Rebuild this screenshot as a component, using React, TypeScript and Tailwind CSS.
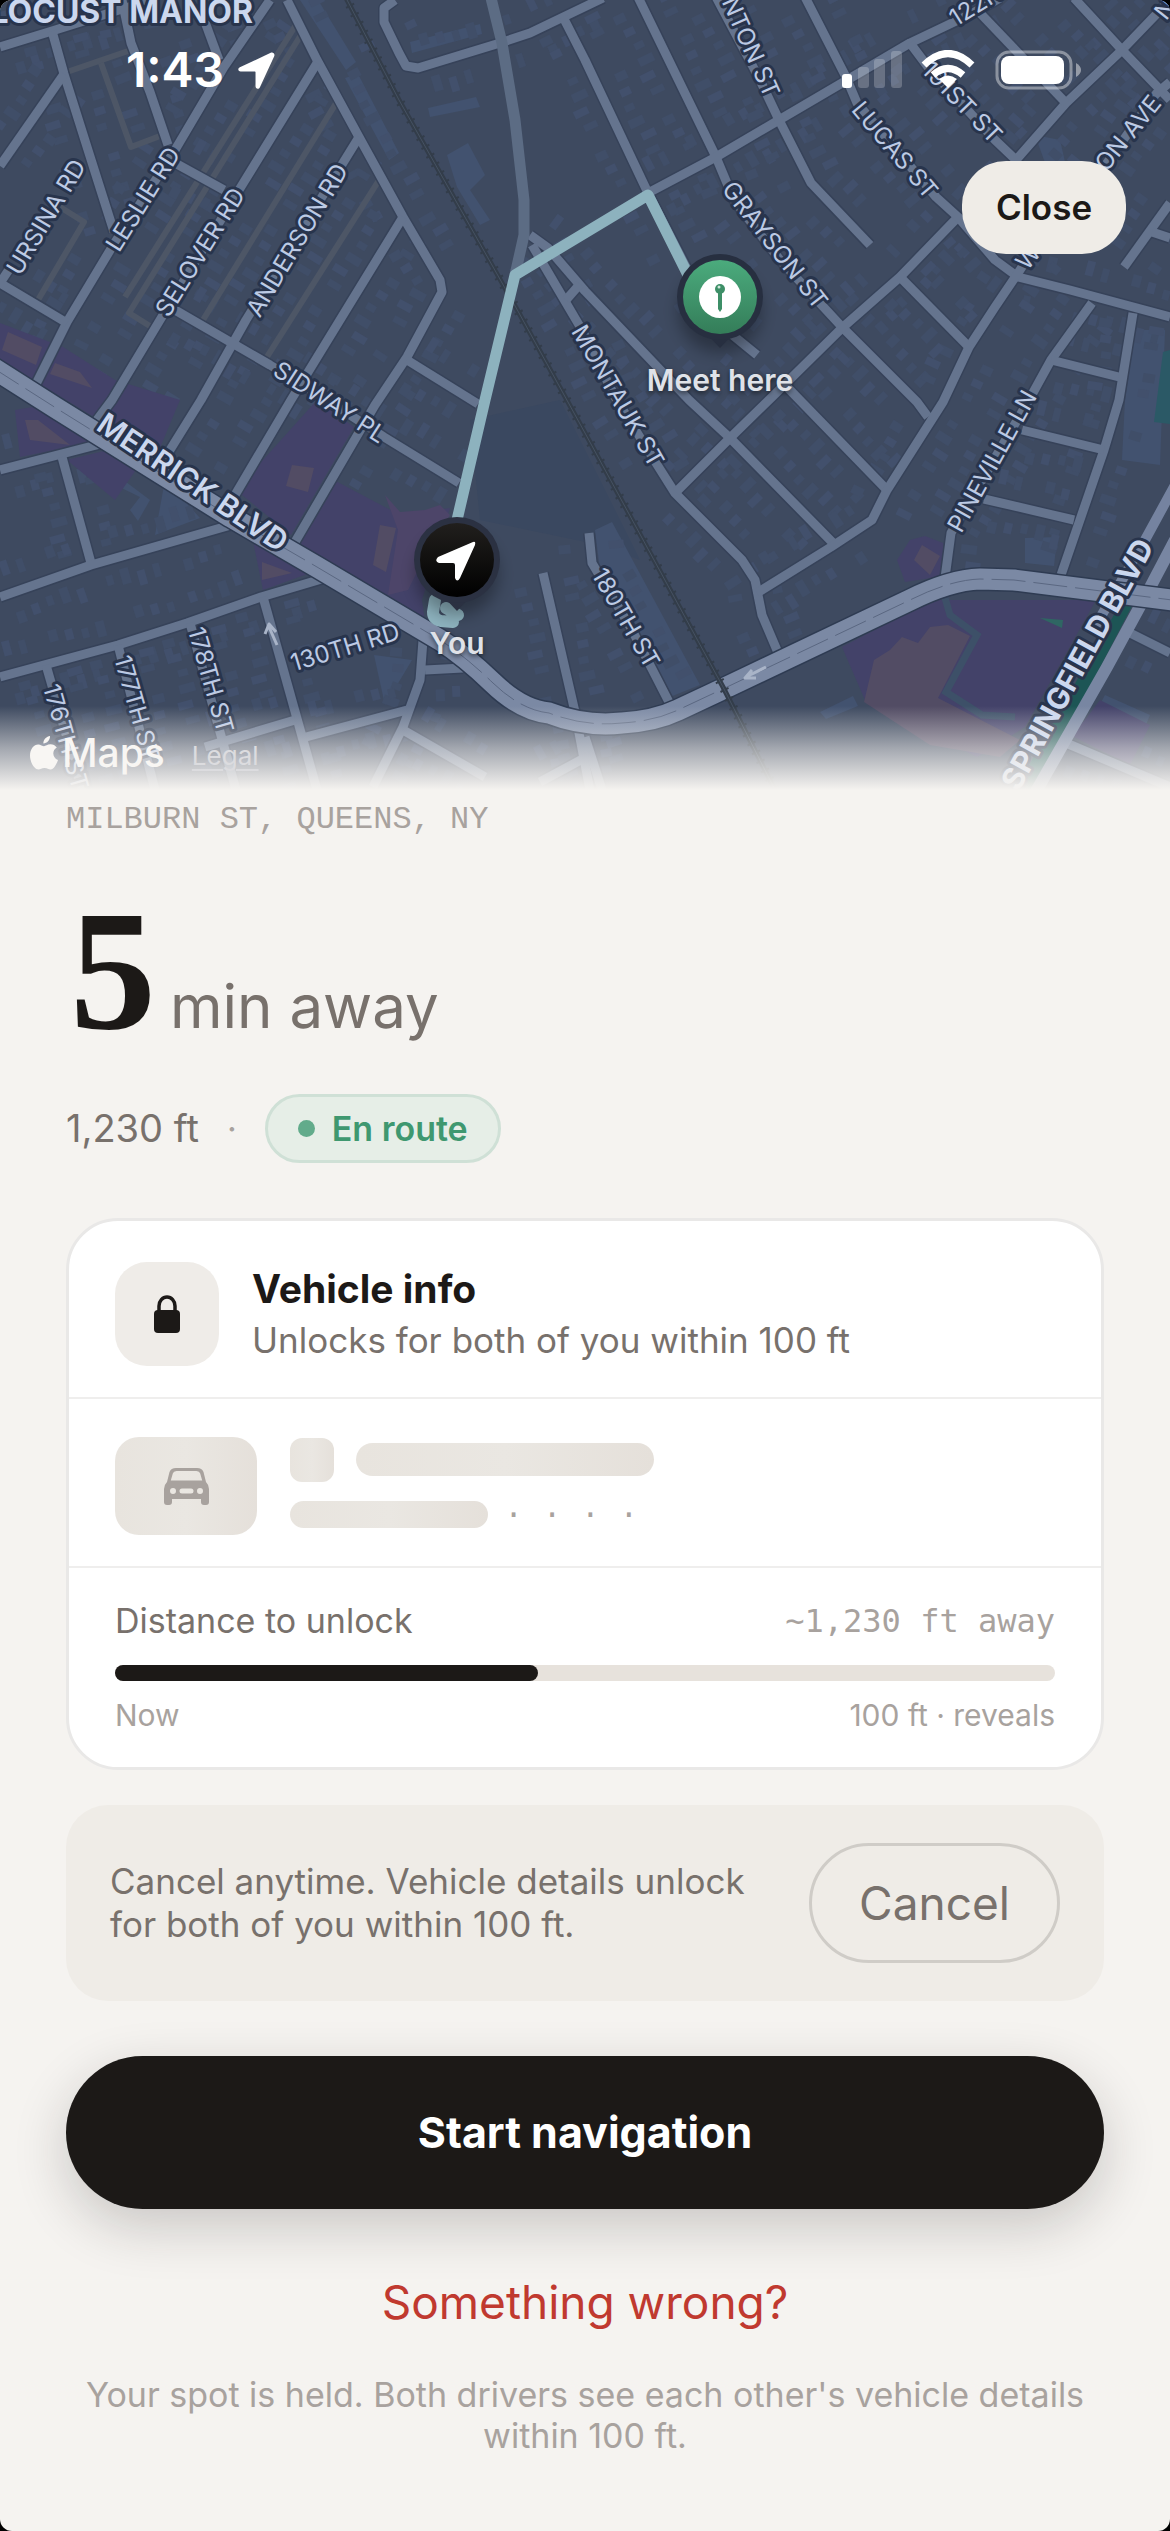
import React from 'react'

type Point = [number, number]

const STREETS: Point[][] = [
  [[0, 47], [52, 31], [135, 5], [150, 0]],
  [[52, 31], [64, 74], [88, 150], [114, 232]],
  [[64, 74], [0, 166]],
  [[122, 0], [131, 43], [150, 92], [168, 145]],
  [[205, 22], [219, 60]],
  [[270, 0], [224, 67], [175, 150], [112, 247], [67, 322], [36, 384]],
  [[287, 0], [317, 60], [359, 137], [403, 217], [440, 280], [442, 292], [407, 357], [375, 405], [295, 542]],
  [[317, 63], [239, 190], [160, 320], [112, 400], [97, 420]],
  [[359, 137], [246, 320], [201, 400], [165, 458]],
  [[403, 217], [291, 400], [235, 495]],
  [[175, 310], [270, 365], [330, 402], [384, 437], [459, 483]],
  [[175, 163], [224, 190]],
  [[12, 265], [0, 283], [67, 323]],
  [[407, 360], [478, 404]],
  [[395, 0], [384, 8], [384, 22], [399, 53], [406, 66], [418, 68], [500, 43], [530, 33], [603, -2]],
  [[563, 17], [585, 60], [648, 193], [686, 267], [730, 333], [757, 355]],
  [[530, 235], [548, 248], [585, 291], [689, 400], [730, 438], [835, 545]],
  [[532, 245], [582, 330], [615, 397], [656, 463], [675, 493], [742, 560], [755, 580], [762, 615], [779, 655]],
  [[566, 300], [580, 284]],
  [[637, -5], [716, 157], [734, 200], [780, 260], [842, 327], [917, 402], [928, 417]],
  [[676, 492], [730, 438], [772, 397], [842, 328], [900, 277], [958, 217]],
  [[788, 388], [887, 490]],
  [[648, 193], [716, 157], [779, 120], [842, 83], [910, 43], [973, 13], [1000, -2]],
  [[715, -5], [760, 80], [779, 120], [811, 183], [870, 245]],
  [[805, -3], [846, 77], [857, 103], [936, 197], [958, 217], [995, 260], [1018, 277], [1070, 290], [1170, 317]],
  [[910, 43], [928, 67], [995, 140], [1016, 160], [1066, 103], [1122, 50], [1170, 0]],
  [[980, 13], [1066, 103]],
  [[1074, -2], [1122, 50], [1170, 100]],
  [[1170, 82], [1156, 94], [1104, 167], [1022, 267], [995, 307], [969, 347], [943, 402], [887, 490], [872, 520], [831, 547], [757, 593]],
  [[1170, 203], [1124, 267]],
  [[1152, 232], [1170, 238]],
  [[900, 277], [969, 347]],
  [[1092, 303], [1051, 360], [1029, 400], [951, 533], [945, 578]],
  [[1051, 360], [1119, 377]],
  [[1133, 313], [1119, 400], [1104, 450], [1061, 575]],
  [[1022, 430], [1104, 450]],
  [[984, 499], [1074, 520]],
  [[0, 470], [108, 442]],
  [[62, 457], [91, 563]],
  [[0, 597], [91, 565], [231, 525]],
  [[0, 677], [118, 645], [187, 623], [261, 597], [325, 578]],
  [[46, 665], [85, 800]],
  [[118, 645], [155, 790]],
  [[190, 623], [236, 790]],
  [[263, 597], [317, 790]],
  [[423, 640], [420, 680], [403, 727], [373, 787]],
  [[425, 670], [463, 668]],
  [[205, 747], [295, 720]],
  [[306, 737], [407, 710]],
  [[403, 730], [485, 777]],
  [[543, 573], [575, 712], [590, 790]],
  [[589, 533], [592, 563], [632, 630], [671, 706]],
  [[1130, 633], [1170, 653]],
  [[1066, 743], [1170, 787]],
  [[585, 737], [602, 790]],
  [[540, 782], [590, 755]],
]

const ALLEYS: Point[][] = [
  [[64, 73], [131, 50]],
  [[101, 63], [131, 147], [160, 136]],
  [[299, 20], [125, 297]],
  [[304, 30], [129, 313], [153, 328]],
  [[338, 100], [203, 320]],
  [[381, 177], [265, 360]],
  [[60, 207], [84, 222], [38, 300]],
]

const AVENUE: Point[] = [[491, -2], [502, 43], [515, 120], [524, 200], [524, 235], [515, 275]]

const RAIL: Point[] = [[345, -4], [399, 100], [519, 313], [585, 433], [723, 687], [775, 790]]

const BOULEVARD =
  'M-10 366L56 408L231 517L317 567L440 640Q465 656 493 683T549 713Q585 727 622 723Q655 721 678 710L727 687L910 600Q950 580 980 579L1014 580L1180 601'

const PURPLE = [
  '0,323 63,347 115,380 180,400 157,455 0,360',
  '15,410 45,405 104,440 20,457',
  '67,460 108,450 138,467 115,500',
  '317,400 354,427 291,535 236,490',
  '328,477 400,515 450,508 422,600 425,622 297,543',
  '252,536 310,573 263,590',
  '910,540 925,536 943,543 950,575 905,582 897,560',
  '842,647 932,600 1096,600 1025,727 977,757 865,700',
  '1085,720 1100,700 1150,725 1130,765 1070,735',
]

const BROWN = [
  '8,332 42,347 36,365 2,350',
  '55,363 80,372 92,388 50,374',
  '25,420 38,420 70,445 30,440',
  '292,465 314,468 308,492 286,486',
  '380,525 396,528 386,572 373,565',
  '262,562 292,573 262,580',
  '874,660 890,650 902,637 918,643 930,627 948,625 970,636 938,698 1020,740 1000,757 930,745 864,702',
  '914,560 922,545 940,556 930,575',
]

const BLOCKS = [
  '1035,135 1060,140 1068,175 1052,182',
  '447,155 468,143 485,175 470,190 490,220 480,225 457,187',
  '345,78 358,74 399,153 389,160',
  '300,0 318,0 356,62 346,70',
  '428,108 476,97 480,107 430,117',
  '410,42 480,24 482,34 412,53',
  '110,470 150,500 138,521 130,510 140,497 105,480',
  '165,480 200,518 155,535',
  '374,655 412,660 385,705',
  '1025,538 1057,537 1054,566 1025,563',
  '820,712 853,696 858,706 826,719',
  '1105,695 1150,715 1145,727 1098,708',
  '1125,400 1135,330 1165,330 1160,465 1122,460',
  '595,530 612,522 700,685 670,697 600,570',
]

const LABELS = [
  { text: 'URSINA RD', x: 46, y: 217, angle: -59 },
  { text: 'LESLIE RD', x: 143, y: 199, angle: -58 },
  { text: 'SELOVER RD', x: 200, y: 252, angle: -58 },
  { text: 'ANDERSON RD', x: 297, y: 240, angle: -59 },
  { text: 'SIDWAY PL', x: 330, y: 402, angle: 33 },
  { text: 'MONTAUK ST', x: 618, y: 396, angle: 60 },
  { text: 'GRAYSON ST', x: 775, y: 245, angle: 52 },
  { text: 'NTON ST', x: 751, y: 47, angle: 66 },
  { text: 'LUCAS ST', x: 895, y: 150, angle: 50 },
  { text: '191ST ST', x: 962, y: 102, angle: 46 },
  { text: '122ND', x: 983, y: 0, angle: -32 },
  { text: 'ON AVE', x: 1128, y: 133, angle: -51 },
  { text: 'W', x: 1028, y: 257, angle: -51 },
  { text: 'N', x: 1165, y: 9, angle: -51 },
  { text: 'PINEVILLE LN', x: 992, y: 461, angle: -61 },
  { text: '180TH ST', x: 626, y: 618, angle: 60 },
  { text: '178TH ST', x: 211, y: 680, angle: 74 },
  { text: '177TH ST', x: 137, y: 708, angle: 74 },
  { text: '176TH ST', x: 66, y: 737, angle: 74 },
  { text: '130TH RD', x: 345, y: 647, angle: -17 },
]

const toPoints = (line: Point[]) => line.map((p) => p.join(',')).join(' ')

// Small house footprints on both sides of every street
function houses() {
  const list: {
    x: number
    y: number
    w: number
    h: number
    angle: number
    fill: string
  }[] = []
  STREETS.forEach((street, s) => {
    for (let i = 1; i < street.length; i++) {
      const [x1, y1] = street[i - 1]
      const [x2, y2] = street[i]
      const length = Math.hypot(x2 - x1, y2 - y1)
      const ux = (x2 - x1) / length
      const uy = (y2 - y1) / length
      for (let d = 14; d < length - 8; d += 16) {
        ;[1, -1].forEach((side) => {
          const seed = (s * 7 + i * 5 + Math.round(d * 3) + side * 2 + 2) % 7
          if (seed === 3) return
          const offset = side * (20 + (seed % 3) * 3)
          list.push({
            x: x1 + ux * d - uy * offset,
            y: y1 + uy * d + ux * offset,
            w: 7 + (seed % 4),
            h: 10 + seed,
            angle: (Math.atan2(uy, ux) * 180) / Math.PI,
            fill: seed % 2 ? '#42506c' : '#404e68',
          })
        })
      }
    }
  })
  return list
}

function MapCanvas(): JSX.Element {
  return (
    <svg
      className="block h-full w-full"
      viewBox="0 0 1170 790"
      preserveAspectRatio="xMidYMin slice"
      role="img"
      aria-label="Route map"
    >
      <rect width="1170" height="790" fill="#3e4a60" />
      <polygon points="470,420 560,400 640,560 600,545 480,520" fill="#3a4860" />
      {BLOCKS.map((points) => (
        <polygon key={points} points={points} fill="#42526f" />
      ))}
      {houses().map((h, i) => (
        <rect
          key={i}
          x={h.x - h.w / 2}
          y={h.y - h.h / 2}
          width={h.w}
          height={h.h}
          fill={h.fill}
          transform={`rotate(${h.angle} ${h.x} ${h.y})`}
        />
      ))}
      {PURPLE.map((points) => (
        <polygon key={points} points={points} fill="#434269" />
      ))}
      {BROWN.map((points) => (
        <polygon key={points} points={points} fill="#524c64" />
      ))}
      <polygon
        points="385,495 400,512 425,510 440,505 450,515 418,570 408,590 388,595 398,530"
        fill="#4d4569"
      />
      <path
        d="M945 598L950 615L977 635L946 692L982 715L1015 717"
        fill="none"
        stroke="#3d5068"
        strokeWidth="7"
      />
      <polygon points="1040,618 1063,620 1062,628" fill="#2f6663" />
      <polygon points="1170,350 1163,352 1154,422 1170,424" fill="#2b5966" />
      <polygon points="1120,604 1133,604 1060,745 1035,790 1015,790" fill="#1d5555" />
      <g fill="none" strokeLinejoin="round">
        {ALLEYS.map((line, i) => (
          <polyline
            key={i}
            points={toPoints(line)}
            stroke="#4d5666"
            strokeWidth="6"
          />
        ))}
        {STREETS.map((line, i) => (
          <polyline
            key={i}
            points={toPoints(line)}
            stroke="#364259"
            strokeWidth="12"
          />
        ))}
        {STREETS.map((line, i) => (
          <polyline
            key={i}
            points={toPoints(line)}
            stroke="#65748e"
            strokeWidth="9"
          />
        ))}
        <polyline points={toPoints(AVENUE)} stroke="#5c6c84" strokeWidth="11" />
        <path d="M1175 485L1145 540L1096 625" stroke="#7583a0" strokeWidth="10" />
        <path d="M1175 540L1145 597L1107 667L1034 795" stroke="#7886a2" strokeWidth="12" />
        <path d={BOULEVARD} stroke="#2e3b52" strokeWidth="24" />
        <path d={BOULEVARD} stroke="#7b89a4" strokeWidth="21" />
        <path
          d={BOULEVARD}
          stroke="#5a6781"
          strokeWidth="1"
          strokeDasharray="34 8"
        />
        <polyline points={toPoints(RAIL)} stroke="#333d4a" strokeWidth="5" />
        <polyline
          points={toPoints(RAIL)}
          stroke="#333d4a"
          strokeWidth="9"
          strokeDasharray="2 8"
        />
        <polyline points={toPoints(RAIL)} stroke="#465262" strokeWidth="1" />
        <polyline
          points="457,520 485,400 515,275 648,195 688,275"
          stroke="#8db2be"
          strokeWidth="11"
        />
        <path
          d="M435 600L433 612Q433 619 441 621L453 622M446 608L458 615"
          stroke="#8db2be"
          strokeWidth="12"
          strokeLinecap="round"
        />
        <path
          d="M277 645L269 627M265 634L269 624L276 632M766 667L746 677M752 670L745 678L756 678"
          stroke="#a9b4c8"
          strokeWidth="3"
        />
      </g>
      <g
        fontFamily="Inter, sans-serif"
        textAnchor="middle"
        fill="#bccae4"
        stroke="#28344c"
        strokeWidth="6"
        strokeLinejoin="round"
        paintOrder="stroke"
      >
        {LABELS.map((label) => (
          <text
            key={label.text}
            x={label.x}
            y={label.y}
            fontSize="24"
            dominantBaseline="central"
            transform={`rotate(${label.angle} ${label.x} ${label.y})`}
          >
            {label.text}
          </text>
        ))}
        <g fontWeight="700" fill="#cbd7ee">
          <text
            x="193"
            y="482"
            fontSize="30"
            fontWeight="600"
            dominantBaseline="central"
            transform="rotate(34 193 482)"
          >
            MERRICK BLVD
          </text>
          <text
            x="1077"
            y="664"
            fontSize="30"
            dominantBaseline="central"
            transform="rotate(-61 1077 664)"
          >
            SPRINGFIELD BLVD
          </text>
          <text x="253" y="23" fontSize="32" textAnchor="end">
            LOCUST MANOR
          </text>
        </g>
      </g>
    </svg>
  )
}

function NavigationArrow({ className }: { className: string }): JSX.Element {
  return (
    <svg className={className} viewBox="0 0 38 38" fill="currentColor">
      <path d="M33.6.8 1.9 15.7C-.5 16.9-.1 20 2.7 20h14.6c.5 0 .7.2.7.7v14.6c0 2.9 3.3 3.4 4.500.9L37.200 4.400C38.200 2 36-.3 33.600.8Z" />
    </svg>
  )
}

function StatusBar(): JSX.Element {
  return (
    <div className="flex items-center justify-between pr-[89px] pl-[126px] pt-[42px] text-white">
      <div className="flex items-center gap-[14px]">
        <span className="text-[48px] leading-[56px] font-semibold">1:43</span>
        <NavigationArrow className="h-[37px] w-[37px]" />
      </div>
      <svg
        className="h-[40px] w-[239px]"
        viewBox="843 49 239 40"
        role="img"
        aria-label="Signal, Wi-Fi and battery"
      >
        <rect x="843" y="73" width="10" height="14" rx="3" fill="#fff" />
        <g fill="#fff" fillOpacity="0.22">
          <rect x="859" y="66" width="11" height="21" rx="3" />
          <rect x="875" y="58" width="11" height="29" rx="3" />
          <rect x="892" y="50" width="11" height="37" rx="3" />
        </g>
        <path d="M949 87L940 78Q949 71 958 78Z" fill="#fff" />
        <g fill="none" stroke="#fff" strokeWidth="7">
          <path d="M934 74Q949 61 964 74" />
          <path d="M925 64Q949 41 973 64" />
        </g>
        <rect
          x="998"
          y="51"
          width="74"
          height="36"
          rx="12"
          fill="none"
          stroke="#fff"
          strokeOpacity="0.4"
          strokeWidth="3"
        />
        <rect x="1002" y="55" width="63" height="28" rx="8" fill="#fff" />
        <path d="M1077 62Q1082 65 1082 69T1077 76Z" fill="#fff" fillOpacity="0.45" />
      </svg>
    </div>
  )
}

function MapPin({
  label,
  className,
  from,
  to,
  ring,
  children,
}: {
  label: string
  className: string
  from: string
  to: string
  ring: string
  children: React.ReactNode
}): JSX.Element {
  const id = `pin-${label.replace(' ', '-')}`

  return (
    <div
      className={`absolute flex w-[160px] -translate-x-1/2 flex-col items-center ${className}`}
    >
      <svg className="h-[100px] w-[100px] overflow-visible" viewBox="0 0 100 100">
        <defs>
          <linearGradient id={id} x1="0" y1="0" x2="0" y2="1">
            <stop offset="0" stopColor={from} />
            <stop offset="1" stopColor={to} />
          </linearGradient>
          <filter id={`${id}-shadow`} x="-50%" y="-50%" width="200%" height="200%">
            <feGaussianBlur stdDeviation="8" />
          </filter>
        </defs>
        <circle cx="50" cy="60" r="42" fill="#000" fillOpacity="0.3" filter={`url(#${id}-shadow)`} />
        <path d="M36 82L50 97L64 82Z" fill={ring} />
        <circle cx="50" cy="46" r="43" fill={ring} />
        <circle cx="50" cy="46" r="37" fill={`url(#${id})`} />
        {children}
      </svg>
      <span className="mt-[11px] text-[30px] leading-[36px] font-semibold whitespace-nowrap text-[#dfe2e8] [text-shadow:0_2px_5px_rgba(0,0,0,0.6)]">
        {label}
      </span>
    </div>
  )
}

function MapHeader(): JSX.Element {
  return (
    <header className="relative h-[790px] overflow-hidden">
      <div className="absolute inset-0">
        <MapCanvas />
      </div>
      <MapPin
        label="Meet here"
        className="top-[251px] left-[720px]"
        from="#4bab7d"
        to="#347d59"
        ring="#272f40"
      >
        <circle cx="50" cy="46" r="21" fill="#fff" />
        <path d="M48 40H52V58L50 61L48 58Z" fill="#3d8f67" />
        <circle cx="50" cy="38" r="5" fill="#3d8f67" />
        <circle cx="49" cy="36" r="1.500" fill="#cfe8db" />
      </MapPin>
      <MapPin
        label="You"
        className="top-[514px] left-[457px]"
        from="#211f1d"
        to="#000000"
        ring="#2b3142"
      >
        <path
          d="M66 28L31 43Q27 47 32 49L46 49Q48 49 48 51L48 64Q50 69 53 64L68 31Q69 27 66 28Z"
          fill="#fff"
        />
      </MapPin>
      <div className="absolute inset-x-0 bottom-0 h-[84px] bg-linear-to-b from-[#f5f3f0]/0 via-[#f5f3f0]/55 to-[#f5f3f0]" />
      <div className="absolute bottom-[12px] left-[30px] flex items-center text-[#f8f6f3]">
        <svg className="mr-[4px] h-[34px] w-[28px]" viewBox="0 0 28 34" fill="currentColor">
          <path d="M20 0c.3 3.900-3 7.500-6.600 7.400C13 3.900 16.600.4 20 0ZM14 10.200c1.500 0 3.500-1.900 6.500-1.900 2.500 0 4.900 1.200 6.300 3.300-5.200 3-4.400 10.200 1.200 12.400-1.200 3.400-3.900 9.300-7.300 9.500-2.200.1-3.300-1.400-6.200-1.400s-4 1.400-6 1.400C4.300 33.500 0 26.300 0 19.600 0 12.700 4 8.500 8.200 8.400c2.400 0 4.400 1.800 5.800 1.800Z" />
        </svg>
        <span className="text-[39px] leading-[50px] font-medium">Maps</span>
        <a href="#legal" className="ml-[27px] pt-[6px] text-[26px] leading-[32px] text-[#dcdcdf] underline underline-offset-4">
          Legal
        </a>
      </div>
      <div className="relative">
        <StatusBar />
        <div className="mt-[63px] flex justify-end pr-[44px]">
          <button className="h-[93px] w-[164px] rounded-[44px] bg-[#efece7] text-[35px] font-semibold text-[#1c1917]">
            Close
          </button>
        </div>
      </div>
    </header>
  )
}

function LockIcon(): JSX.Element {
  return (
    <svg className="h-[38px] w-[26px]" viewBox="0 0 26 38">
      <path
        d="M5 18V11a8 9 0 0 1 16 0V18"
        fill="none"
        stroke="#1c1917"
        strokeWidth="3.500"
      />
      <rect y="15" width="26" height="23" rx="4" fill="#1c1917" />
    </svg>
  )
}

function CarIcon(): JSX.Element {
  return (
    <svg className="h-[37px] w-[45px]" viewBox="0 0 45 37">
      <path
        fill="#a8a29e"
        fillRule="evenodd"
        d="M12 0H33Q38 0 39.500 4L42 14Q45 17 45 21V34Q45 37 42 37H40Q37 37 37 34V31H8V34Q8 37 5 37H3Q0 37 0 34V21Q0 17 3 14L5.500 4Q7 0 12 0ZM12.500 3Q9.500 3 8.800 5.500L6.800 12.500H38.200L36.200 5.500Q35.500 3 32.500 3ZM9 20a3 3 0 1 0 0 6 3 3 0 0 0 0-6ZM36 20a3 3 0 1 0 0 6 3 3 0 0 0 0-6ZM18 20.500a2.500 2.500 0 0 0 0 5H27a2.500 2.500 0 0 0 0-5Z"
      />
    </svg>
  )
}

const SKELETON = 'bg-linear-to-r from-[#e8e4de] via-[#eae7e2] to-[#e5e0da]'

function VehicleCard({ progress }: { progress: number }): JSX.Element {
  return (
    <section className="mt-[55px] rounded-[52px] border-[3px] border-[#e9e8e7] bg-white">
      <div className="flex items-center gap-[33px] border-b-2 border-[#efeeed] px-[46px] pt-[41px] pb-[31px]">
        <div className="flex h-[104px] w-[104px] items-center justify-center rounded-[32px] bg-[#efece8]">
          <LockIcon />
        </div>
        <div>
          <h2 className="text-[39px] leading-[52px] font-bold text-[#1c1917]">
            Vehicle info
          </h2>
          <p className="text-[35px] leading-[50px] text-[#78716c]">
            Unlocks for both of you within 100 ft
          </p>
        </div>
      </div>

      <div className="flex items-center gap-[33px] border-b-2 border-[#efeeed] px-[46px] pt-[38px] pb-[31px]">
        <div
          className={`flex h-[98px] w-[142px] items-center justify-center rounded-[24px] ${SKELETON}`}
        >
          <CarIcon />
        </div>
        <div className="flex flex-col gap-[13px]">
          <div className="flex items-center gap-[22px]">
            <div className={`h-[44px] w-[44px] rounded-[12px] ${SKELETON}`} />
            <div className={`h-[33px] w-[298px] rounded-full ${SKELETON}`} />
          </div>
          <div className="flex items-center gap-[16px]">
            <div className={`h-[27px] w-[198px] rounded-full ${SKELETON}`} />
            <span className="font-['Liberation_Mono',monospace] text-[32px] leading-[40px] text-[#a8a29e]">
              · · · ·
            </span>
          </div>
        </div>
      </div>

      <div className="px-[46px] pt-[33px] pb-[34px]">
        <div className="flex justify-between leading-[40px]">
          <span className="text-[34px] text-[#78716c]">Distance to unlock</span>
          <span className="font-['DejaVu_Sans_Mono',monospace] text-[32px] text-[#a8a29e]">
            ~1,230 ft away
          </span>
        </div>
        <div
          role="progressbar"
          aria-label="Distance to unlock"
          aria-valuenow={progress}
          className="mt-[24px] h-[16px] rounded-full bg-[#e7e2dc]"
        >
          <div
            className="h-full rounded-full bg-[#1c1917]"
            style={{ width: `${progress}%` }}
          />
        </div>
        <div className="mt-[16px] flex justify-between text-[30px] leading-[36px] text-[#a8a29e]">
          <span>Now</span>
          <span>100 ft · reveals</span>
        </div>
      </div>
    </section>
  )
}

export default function App(): JSX.Element {
  return (
    <div className="bg-black font-[Inter,sans-serif]">
      <main className="min-h-screen overflow-hidden rounded-[12px] bg-[#f5f3f0]">
        <MapHeader />

        <div className="px-[66px] pt-[10px] pb-[75px]">
          <p className="font-['Liberation_Mono',monospace] text-[32px] leading-[40px] text-[#a8a29e]">
            MILBURN ST, QUEENS, NY
          </p>

          <h1 className="mt-[60px] flex items-baseline gap-[14px] pl-1">
            <span className="font-['Liberation_Serif',serif] text-[172px] leading-[140px] font-bold text-[#1c1917]">
              5
            </span>
            <span className="text-[60px] leading-[60px] text-[#78716c]">
              min away
            </span>
          </h1>

          <div className="mt-[54px] flex items-center text-[38px] text-[#78716c]">
            <span>1,230 ft</span>
            <span className="mx-[28px] text-[34px] text-[#a8a29e]">·</span>
            <span className="flex h-[69px] items-center gap-[17px] rounded-full border-[3px] border-[#cfe0d6] bg-[#e6eee7] px-[30px] text-[34px] font-semibold text-[#3f9870]">
              <span className="h-[17px] w-[17px] rounded-full bg-[#62ab8b]" />
              En route
            </span>
          </div>

          <VehicleCard progress={45} />

          <section className="mt-[35px] flex items-center justify-between rounded-[42px] bg-[#efece7] px-[44px] py-[38px]">
            <p className="max-w-[660px] text-[35px] leading-[43px] text-[#78716c]">
              Cancel anytime. Vehicle details unlock for both of you within 100
              ft.
            </p>
            <button className="h-[120px] w-[251px] shrink-0 rounded-full border-[3px] border-[#cfccc7] text-[46px] text-[#78716c]">
              Cancel
            </button>
          </section>

          <button className="mt-[55px] block h-[153px] w-full rounded-full bg-[#1c1917] text-[43px] font-bold text-white shadow-[0_18px_54px_rgba(28,25,23,0.2)]">
            Start navigation
          </button>

          <button className="mx-auto mt-[65px] block text-[46px] leading-[56px] text-[#c0392f]">
            Something wrong?
          </button>

          <p className="mt-[44px] text-center text-[34px] leading-[41px] text-[#a8a29e]">
            Your spot is held. Both drivers see each other's vehicle details
            within 100 ft.
          </p>
        </div>
      </main>
    </div>
  )
}
